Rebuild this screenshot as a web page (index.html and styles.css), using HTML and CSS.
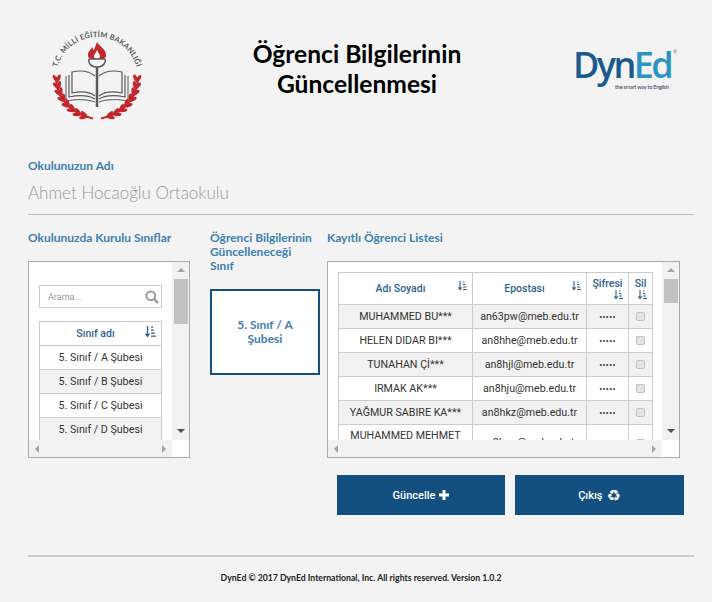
FILE: index.html
```html
<!DOCTYPE html>
<html lang="tr">
<head>
    <meta charset="UTF-8">
    <meta name="viewport" content="width=device-width, initial-scale=1.0">
    <title>Öğrenci Bilgilerinin Güncellenmesi</title>
    <link rel="stylesheet" href="styles.css">
</head>
<body>
    <svg class="defs" width="0" height="0">
        <symbol id="sort" viewBox="0 0 9 10">
            <path d="M2 0v8M0.4 6.4L2 8.6L3.6 6.4" fill="none" stroke="currentColor" stroke-width="1.1"/>
            <path d="M5 1h1.6M5 3.5h2.4M5 6h3.2M5 8.5h4" fill="none" stroke="currentColor" stroke-width="1"/>
        </symbol>
    </svg>
    <div class="page">
        <header class="header">
            <svg class="logo-meb" viewBox="47 28 100 100">
                <defs>
                    <path id="arc" d="M56 78A41 41 0 0 1 138 78"/>
                    <g id="leaf">
                        <ellipse cx="3" cy="-1.500" rx="4.200" ry="1.800" transform="rotate(-28 3 -1.500)"/>
                        <ellipse cx="3" cy="1.500" rx="4.200" ry="1.800" transform="rotate(28 3 1.500)"/>
                    </g>
                    <g id="laurel" fill="#c1272d">
                        <use href="#leaf" transform="translate(57.2 81.500) rotate(265)"/>
                        <use href="#leaf" transform="translate(58.4 88.400) rotate(255)"/>
                        <use href="#leaf" transform="translate(60.7 94.900) rotate(245)"/>
                        <use href="#leaf" transform="translate(64.2 100.900) rotate(235)"/>
                        <use href="#leaf" transform="translate(68.7 106.300) rotate(225)"/>
                        <use href="#leaf" transform="translate(74.1 110.800) rotate(215)"/>
                        <use href="#leaf" transform="translate(80.1 114.300) rotate(205)"/>
                        <use href="#leaf" transform="translate(86.6 116.600) rotate(195)"/>
                        <path d="M56 77C56 97 70 114 93 118.500" fill="none" stroke="#c1272d" stroke-width="2"/>
                    </g>
                </defs>
                <text class="logo-meb-text"><textPath href="#arc" startOffset="50%" text-anchor="middle">T.C. MİLLİ EĞİTİM BAKANLIĞI</textPath></text>
                <path d="M97 42c2 4 9 7 9 13c0 4-3 5-9 5s-9-1-9-5c0-4 3-5 4-8c1 2 1 3 2 3c1-3 2-5 3-8z" fill="#c1272d"/>
                <path d="M97 50c1 3 3 4 3 6c0 2-1 3-3 3s-3-1-3-3c0-2 2-3 3-6z" fill="#f3f3f3"/>
                <path d="M90 59h14c1 0 2 1 1 3c-1 3-4 5-8 5s-7-2-8-5c-1-2 0-3 1-3z" fill="#f3f3f3" stroke="#58595b" stroke-width="1.500"/>
                <path d="M97 67v40" stroke="#58595b" stroke-width="2.500"/>
                <path d="M95 96c-6-5-14-5-23-3V72c9-2 17-1 23 4M99 96c6-5 14-5 23-3V72c-9-2-17-1-23 4" fill="none" stroke="#58595b" stroke-width="1.200"/>
                <path d="M95 99c-7-4-16-4-26-2V75M99 99c7-4 16-4 26-2V75" fill="none" stroke="#58595b" stroke-width="1.200"/>
                <path d="M95 102c-8-3-19-3-29-1V76M99 102c8-3 19-3 29-1V76" fill="none" stroke="#58595b" stroke-width="1"/>
                <use href="#laurel"/>
                <use href="#laurel" transform="matrix(-1 0 0 1 194 0)"/>
            </svg>
            <h1 class="title">Öğrenci Bilgilerinin<br>Güncellenmesi</h1>
            <div class="logo-dyned">
                <div class="logo-dyned-name"><span class="dyn">Dyn</span><span class="ed">Ed</span><span class="reg">®</span></div>
                <div class="logo-dyned-slogan">the smart way to English</div>
            </div>
        </header>

        <section class="school">
            <div class="label">Okulunuzun Adı</div>
            <div class="school-name">Ahmet Hocaoğlu Ortaokulu</div>
        </section>

        <div class="columns">
            <div class="col-classes">
                <h2 class="label col-title">Okulunuzda Kurulu Sınıflar</h2>
                <div class="panel">
                    <div class="panel-view view-classes">
                        <div class="search">
                            <span class="search-text">Arama...</span>
                            <svg class="search-icon" viewBox="0 0 14 14"><circle cx="5.800" cy="5.800" r="4.400" fill="none" stroke="currentColor" stroke-width="2"/><path d="M9 9l4 4" stroke="currentColor" stroke-width="2.400"/></svg>
                        </div>
                        <table class="grid grid-classes">
                            <thead>
                                <tr><th class="th-sort">Sınıf adı<svg class="sort sort-big"><use href="#sort"/></svg></th></tr>
                            </thead>
                            <tbody>
                                <tr><td>5. Sınıf / A Şubesi</td></tr>
                                <tr class="alt"><td>5. Sınıf / B Şubesi</td></tr>
                                <tr><td>5. Sınıf / C Şubesi</td></tr>
                                <tr class="alt"><td>5. Sınıf / D Şubesi</td></tr>
                                <tr><td>5. Sınıf / E Şubesi</td></tr>
                            </tbody>
                        </table>
                    </div>
                    <div class="vbar">
                        <span class="arrow arrow-up"></span>
                        <span class="thumb thumb-classes"></span>
                        <span class="arrow arrow-down"></span>
                    </div>
                    <div class="hbar"><span class="arrow arrow-left"></span><span class="arrow arrow-right"></span></div>
                    <div class="corner"></div>
                </div>
            </div>

            <div class="col-selected">
                <h2 class="label col-title">Öğrenci Bilgilerinin<br>Güncelleneceği<br>Sınıf</h2>
                <div class="selected-box">5. Sınıf / A Şubesi</div>
            </div>

            <div class="col-students">
                <h2 class="label col-title">Kayıtlı Öğrenci Listesi</h2>
                <div class="panel">
                    <div class="panel-view view-students">
                        <table class="grid grid-students">
                            <colgroup>
                                <col class="c-name"><col class="c-mail"><col class="c-pass"><col class="c-del">
                            </colgroup>
                            <thead>
                                <tr>
                                    <th class="th-sort">Adı Soyadı<svg class="sort sort-corner"><use href="#sort"/></svg></th>
                                    <th class="th-sort">Epostası<svg class="sort sort-corner"><use href="#sort"/></svg></th>
                                    <th class="th-stack">Şifresi<svg class="sort"><use href="#sort"/></svg></th>
                                    <th class="th-stack">Sil<svg class="sort"><use href="#sort"/></svg></th>
                                </tr>
                            </thead>
                            <tbody>
                                <tr class="alt"><td>MUHAMMED BU***</td><td>an63pw@meb.edu.tr</td><td class="dots">•••••</td><td><input class="check" type="checkbox" disabled></td></tr>
                                <tr><td>HELEN DIDAR BI***</td><td>an8hhe@meb.edu.tr</td><td class="dots">•••••</td><td><input class="check" type="checkbox" disabled></td></tr>
                                <tr class="alt"><td>TUNAHAN Çİ***</td><td>an8hjl@meb.edu.tr</td><td class="dots">•••••</td><td><input class="check" type="checkbox" disabled></td></tr>
                                <tr><td>IRMAK AK***</td><td>an8hju@meb.edu.tr</td><td class="dots">•••••</td><td><input class="check" type="checkbox" disabled></td></tr>
                                <tr class="alt"><td>YAĞMUR SABIRE KA***</td><td>an8hkz@meb.edu.tr</td><td class="dots">•••••</td><td><input class="check" type="checkbox" disabled></td></tr>
                                <tr><td>MUHAMMED MEHMET YI***</td><td>an8hoo@meb.edu.tr</td><td class="dots">•••••</td><td><input class="check" type="checkbox" disabled></td></tr>
                            </tbody>
                        </table>
                    </div>
                    <div class="vbar">
                        <span class="arrow arrow-up"></span>
                        <span class="thumb thumb-students"></span>
                        <span class="arrow arrow-down"></span>
                    </div>
                    <div class="hbar"><span class="arrow arrow-left"></span><span class="arrow arrow-right"></span></div>
                    <div class="corner"></div>
                </div>
            </div>
        </div>

        <div class="actions">
            <button class="btn" type="button">Güncelle
                <svg class="btn-plus" viewBox="0 0 10 10"><path d="M3.500 0h3v3.500H10v3H6.500V10h-3V6.500H0v-3h3.500z" fill="currentColor"/></svg>
            </button>
            <button class="btn btn-exit" type="button">Çıkış <span class="recycle">♻</span></button>
        </div>

        <footer class="footer">DynEd © 2017 DynEd International, Inc. All rights reserved. Version 1.0.2</footer>
    </div>
</body>
</html>
```

FILE: styles.css
```css
* {
    box-sizing: border-box;
}

body {
    margin: 0;
    background-color: #f3f3f3;
    font-family: "Roboto", Arial, sans-serif;
    overflow: hidden;
}

.defs {
    display: block;
}

.page {
    padding: 0 18px 0 28px;
}

.header {
    display: flex;
    align-items: flex-start;
    height: 152px;
}

.logo-meb {
    width: 100px;
    height: 100px;
    margin: 28px 0 0 19px;
    flex: none;
}

.logo-meb-text {
    font-family: "Lato", sans-serif;
    font-size: 7.500px;
    font-weight: 700;
    letter-spacing: 0.15px;
    fill: #58595b;
}

.title {
    width: 240px;
    margin: 39px 0 0 90px;
    font-family: "Lato", sans-serif;
    font-size: 24.600px;
    line-height: 30px;
    font-weight: 700;
    text-align: center;
    color: #000;
}

.logo-dyned {
    margin: 45px 0 0 96px;
}

.logo-dyned-name {
    display: flex;
    font-family: "Open Sans", sans-serif;
    font-size: 36px;
    line-height: 40px;
    font-weight: 600;
    letter-spacing: -2.600px;
}

.dyn {
    color: #1b5a8e;
}

.ed {
    color: #2b93c4;
}

.reg {
    margin: 4px 0 0 2px;
    font-size: 5px;
    line-height: 6px;
    letter-spacing: 0;
    font-weight: 400;
    color: #888;
}

.logo-dyned-slogan {
    margin: -2px 0 0 42px;
    font-family: "Lato", sans-serif;
    font-size: 5.600px;
    line-height: 8px;
    letter-spacing: -0.25px;
    color: #2d3e50;
    white-space: nowrap;
}

.label {
    margin: 0;
    font-family: "Lato", sans-serif;
    font-size: 12px;
    line-height: 14px;
    font-weight: 700;
    color: #3d80ad;
}

.school {
    padding-top: 7px;
    height: 63px;
    border-bottom: 1px solid #bbb;
}

.school-name {
    margin-top: 9px;
    font-family: "Lato", sans-serif;
    font-size: 17px;
    line-height: 22px;
    font-weight: 300;
    color: #999;
}

.columns {
    display: flex;
    margin-top: 16px;
}

.col-classes {
    width: 162px;
}

.col-selected {
    width: 110px;
    margin-left: 20px;
}

.col-students {
    width: 353px;
    margin-left: 7px;
}

.col-title {
    height: 30px;
}

.col-selected .col-title {
    height: 58px;
}

.panel {
    display: grid;
    grid-template-columns: 1fr 17px;
    grid-template-rows: 1fr 17px;
    height: 197px;
    background: #fff;
    border: 1px solid #aaa;
}

.panel-view {
    overflow: hidden;
    min-width: 0;
    min-height: 0;
}

.view-classes {
    padding: 23px 10px 0 10px;
}

.view-students {
    padding: 10px 0 0 10px;
}

.search {
    display: flex;
    align-items: center;
    justify-content: space-between;
    height: 23px;
    width: 123px;
    margin-bottom: 13px;
    padding: 0 2px 0 8px;
    border: 1px solid #ccc;
}

.search-text {
    font-size: 9px;
    color: #999;
}

.search-icon {
    width: 14px;
    height: 14px;
    color: #999;
}

.grid {
    border-collapse: collapse;
    table-layout: fixed;
    font-size: 10.700px;
    color: #333;
}

.grid th,
.grid td {
    border: 1px solid #ccc;
    text-align: center;
    padding: 4px 2px;
}

.grid td {
    height: 24px;
    line-height: 14px;
}

.grid th {
    position: relative;
    font-size: 10.500px;
    font-weight: 500;
    color: #2f5f8a;
    background: #fff;
}

.grid .alt td {
    background: #f1f1f1;
}

.grid-classes {
    width: 123px;
}

.grid-classes th {
    height: 24px;
    padding: 0 2px;
}

.grid-students {
    width: 314px;
}

.grid-students th {
    height: 32px;
    padding: 0 2px;
    line-height: 13px;
}

.grid th.th-sort {
    padding-right: 12px;
}

.c-name {
    width: 134px;
}

.c-mail {
    width: 114px;
}

.c-pass {
    width: 42px;
}

.c-del {
    width: 24px;
}

.sort {
    width: 9px;
    height: 10px;
    color: #2f5f8a;
}

.sort-big {
    position: absolute;
    top: 4px;
    right: 5px;
    width: 11px;
    height: 12px;
}

.sort-corner {
    position: absolute;
    top: 8px;
    right: 5px;
}

.th-stack .sort {
    display: block;
    margin-left: auto;
    margin-right: 3px;
}

.dots {
    font-size: 9px;
    letter-spacing: 0.3px;
}

.check {
    appearance: none;
    display: block;
    width: 9px;
    height: 9px;
    margin: 0 auto;
    background: #e4e4e4;
    border: 1px solid #c2c2c2;
    border-radius: 2px;
}

.vbar {
    display: flex;
    flex-direction: column;
    align-items: center;
    grid-row: 1;
    grid-column: 2;
    padding: 6px 0 0;
    background: #f1f1f1;
}

.thumb {
    width: 14px;
    margin-top: 7px;
    background: #c1c1c1;
}

.thumb-classes {
    height: 45px;
}

.thumb-students {
    height: 24px;
}

.arrow {
    display: block;
    width: 0;
    height: 0;
    border-style: solid;
    border-color: transparent;
}

.arrow-up {
    border-width: 0 4px 4px;
    border-bottom-color: #a3a3a3;
}

.arrow-down {
    margin-top: auto;
    margin-bottom: 7px;
    border-width: 4px 4px 0;
    border-top-color: #505050;
}

.hbar {
    display: flex;
    align-items: center;
    justify-content: space-between;
    padding: 0 6px;
    background: #f1f1f1;
}

.arrow-left {
    border-width: 4px 4px 4px 0;
    border-right-color: #a3a3a3;
}

.arrow-right {
    border-width: 4px 0 4px 4px;
    border-left-color: #a3a3a3;
}

.corner {
    background: #fff;
}

.selected-box {
    display: flex;
    align-items: center;
    justify-content: center;
    height: 86px;
    padding: 0 16px;
    background: #fff;
    border: 2px solid #134f7f;
    font-family: "Lato", sans-serif;
    font-size: 12px;
    line-height: 14px;
    font-weight: 700;
    text-align: center;
    color: #3d80ad;
}

.actions {
    display: flex;
    gap: 10px;
    margin: 17px 0 0 309px;
}

.btn {
    display: flex;
    align-items: center;
    justify-content: center;
    gap: 4px;
    width: 168px;
    height: 40px;
    background: #134f7f;
    color: #fff;
    border: none;
    font-family: "Roboto", sans-serif;
    font-size: 11px;
    font-weight: 500;
}

.btn-exit {
    width: 169px;
}

.btn-plus {
    width: 10px;
    height: 10px;
}

.recycle {
    font-family: "DejaVu Sans", sans-serif;
    font-size: 16px;
    line-height: 13px;
}

.footer {
    margin-top: 40px;
    padding-top: 15px;
    border-top: 2px solid #ccc;
    font-family: "Lato", sans-serif;
    font-size: 8.700px;
    line-height: 12px;
    font-weight: 700;
    text-align: center;
    color: #222;
}
```
